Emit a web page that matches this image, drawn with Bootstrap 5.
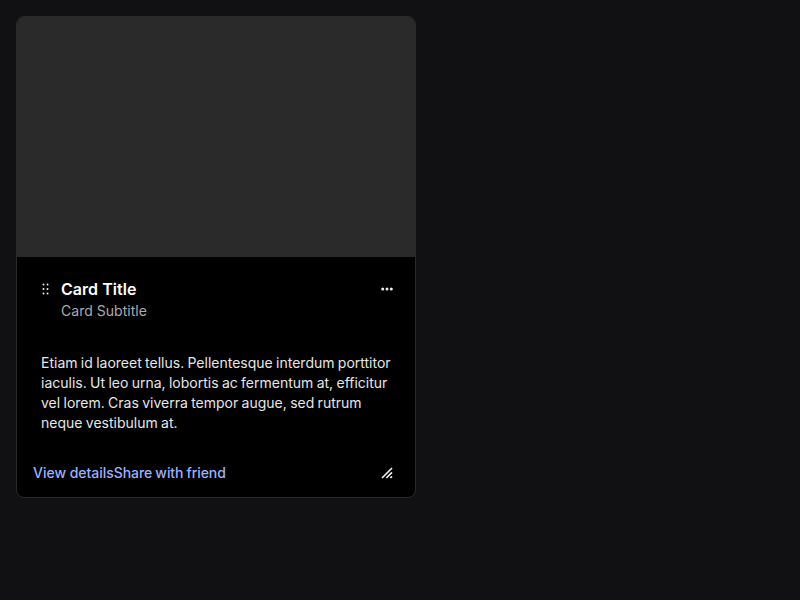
<!DOCTYPE html>
<html lang="en" data-bs-theme="dark">
<head>
<meta charset="utf-8">
<meta name="viewport" content="width=device-width, initial-scale=1">
<title>Card</title>
<link href="https://cdn.jsdelivr.net/npm/bootstrap@5.3.0/dist/css/bootstrap.min.css" rel="stylesheet">
<style>
body { background: #111113; color: #eeeeec; font: 400 14px/20px Inter, sans-serif; }
.demo-card { width: 400px; background: #000; border: 1px solid #2a2a2c; border-radius: 8px; color: #eeeeee; }
.demo-media { height: 240px; background: #2a2a2a; }
.demo-title { font-size: 16px; line-height: 24px; font-weight: 600; letter-spacing: .04px; }
.demo-subtitle { color: #a9abb1; letter-spacing: .03px; }
.demo-link { color: #9eb1ff; font-weight: 500; text-decoration: none; letter-spacing: -.02px; }
.demo-link + .demo-link { word-spacing: -.5px; letter-spacing: -.08px; }
.demo-header { padding: 20px 16px 16px 24px; }
.demo-text { padding: 16px 20px 16px 24px; color: #e6e6e6; word-spacing: -.6px; }
.demo-footer { padding: 12px 16px; }
.icon-cell { width: 24px; height: 24px; }
</style>
</head>
<body class="p-3">
<article class="card demo-card overflow-hidden">
  <div class="demo-media"></div>
  <div class="demo-header d-flex align-items-start">
    <svg class="mt-1 me-1" width="16" height="16" viewBox="0 0 16 16" fill="currentColor" aria-hidden="true"><circle cx="2.5" cy="3.5" r="1"/><circle cx="6.5" cy="3.5" r="1"/><circle cx="2.5" cy="8" r="1"/><circle cx="6.5" cy="8" r="1"/><circle cx="2.5" cy="12.5" r="1"/><circle cx="6.5" cy="12.5" r="1"/></svg>
    <div class="flex-grow-1">
      <h5 class="demo-title mb-0">Card Title</h5>
      <div class="demo-subtitle">Card Subtitle</div>
    </div>
    <span class="icon-cell d-flex align-items-center justify-content-center"><svg width="16" height="16" viewBox="0 0 16 16" fill="currentColor" aria-hidden="true"><circle cx="3.7" cy="8" r="1.5"/><circle cx="8" cy="8" r="1.5"/><circle cx="12.3" cy="8" r="1.5"/></svg></span>
  </div>
  <p class="demo-text mb-0">Etiam id laoreet tellus. Pellentesque interdum porttitor iaculis. Ut leo urna, lobortis ac fermentum at, efficitur vel lorem. Cras viverra tempor augue, sed rutrum neque vestibulum at.</p>
  <div class="demo-footer d-flex align-items-center">
    <a class="demo-link" href="#">View details</a><a class="demo-link" href="#">Share with friend</a>
    <span class="icon-cell ms-auto d-flex align-items-center justify-content-center"><svg width="16" height="16" viewBox="0 0 16 16" stroke="currentColor" fill="none" stroke-width="1.7" aria-hidden="true"><path d="M3 13 13 3M7.3 13 13 7.3M11.3 13 13 11.3"/></svg></span>
  </div>
</article>
</body>
</html>
